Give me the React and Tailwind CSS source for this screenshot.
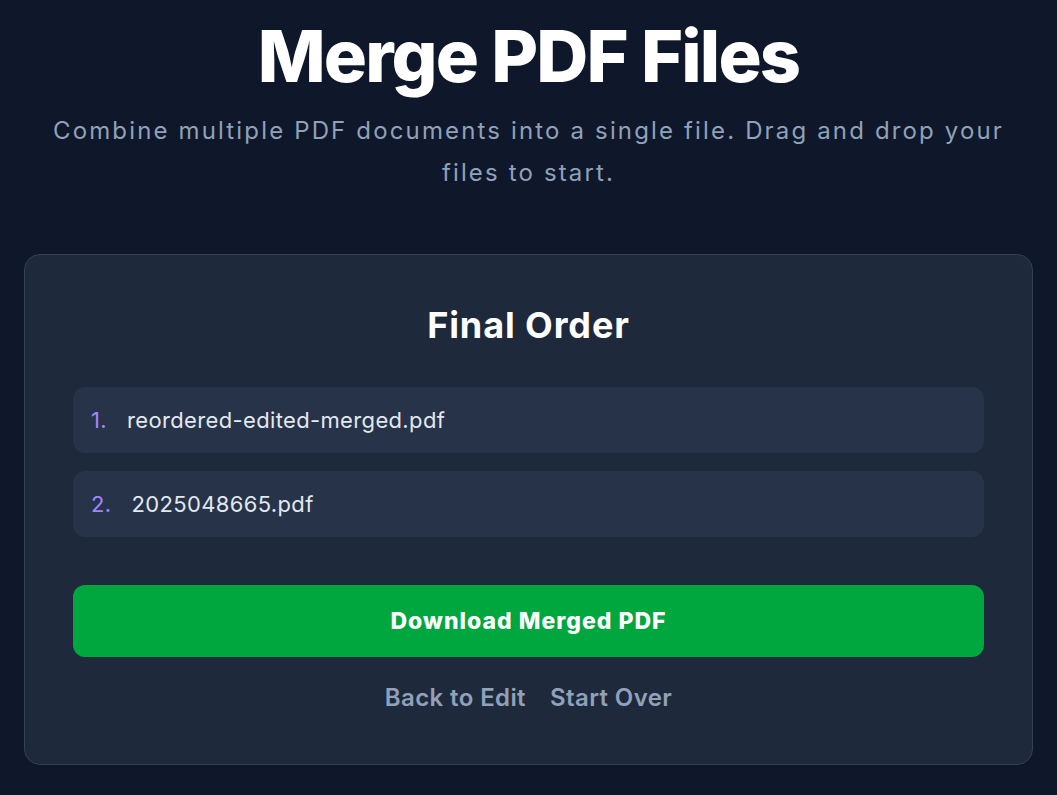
export default function App() {
  const files = ["reordered-edited-merged.pdf", "2025048665.pdf"];
  return (
    <div
      className="min-h-screen bg-[#0f172a] px-6 pt-[20px] pb-8"
      style={{ fontFamily: "Inter, 'Noto Sans', sans-serif" }}
    >
      <div className="flex flex-col items-center text-center">
        <h1 className="text-[72px] leading-[72px] font-extrabold tracking-[-0.025em] text-white">
          Merge PDF Files
        </h1>
        <p className="mt-[18px] text-[24px] leading-[42px] text-[#90a1b9] tracking-[2.15px]">
          Combine multiple PDF documents into a single file. Drag and drop your
          <br />
          files to start.
        </p>
      </div>

      <div className="mt-[60px] rounded-2xl border border-[#334155] bg-[#1e293b] px-12 pt-[50px] pb-[50px]">
        <h2 className="text-center text-[36px] leading-[40px] font-bold tracking-[0.9px] text-white">
          Final Order
        </h2>
        <ol className="mt-[42px] flex flex-col gap-[18px]">
          {files.map((f, i) => (
            <li
              key={f}
              className="flex items-center rounded-xl bg-[#263348] pl-[18px] pr-4 py-[19px] text-[22px] leading-[28px] tracking-[0.35px]"
            >
              <span className="text-[#a684ff] mr-[20px]">{i + 1}.</span>
              <span className="text-[#e2e8f0]">{f}</span>
            </li>
          ))}
        </ol>
        <button className="mt-12 flex h-[72px] w-full items-center justify-center rounded-xl bg-[#00a63e] text-[23px] font-extrabold tracking-[1px] text-white">
          Download Merged PDF
        </button>
        <div className="mt-[25px] flex items-center justify-center gap-6 text-[24px] leading-[32px] font-semibold tracking-[0.4px] text-[#90a1b9]">
          <button>Back to Edit</button>
          <button>Start Over</button>
        </div>
      </div>
    </div>
  );
}
